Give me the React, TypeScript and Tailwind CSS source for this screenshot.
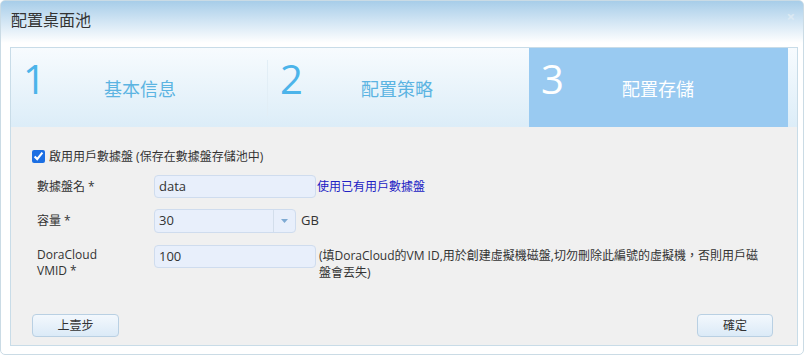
import React from "react";

const steps = [
  { n: "1", label: "基本信息", active: false },
  { n: "2", label: "配置策略", active: false },
  { n: "3", label: "配置存儲", active: true },
];

const App = () => {
  return (
    <div className="w-[806px] h-[355px] bg-white font-['Open_Sans','Noto_Sans_CJK_TC',sans-serif] text-[#333]">
      <div className="w-[804px] h-[355px] rounded-[5px] border border-[#cadbe5] bg-[linear-gradient(to_bottom,#a7cde9_0px,#ffffff_42px)] flex flex-col">
        {/* Title bar */}
        <div className="h-[46px] flex items-start justify-between pl-[10px] pr-[8px] pt-[7px]">
          <span className="text-[16px] leading-[24px] text-[#333]">配置桌面池</span>
          <span className="text-[15px] leading-[16px] font-bold text-[#dbe9f3]">×</span>
        </div>

        {/* Panel */}
        <div className="ml-[9px] w-[788px] h-[299px] border border-[#c8dce8] flex flex-col">
          {/* Steps */}
          <div className="h-[79px] flex bg-[linear-gradient(to_bottom,#f7fbfe,#dcedf8)] pr-[8px]">
            {steps.map((s, i) => (
              <React.Fragment key={s.n}>
                <div
                  className={
                    "h-full flex items-center pl-[12px] " +
                    (i === 0 ? "w-[256px] " : i === 1 ? "w-[261px] " : "w-[259px] ") +
                    (s.active ? "bg-[#99caf1] text-white" : "text-[#4cb4ea]")
                  }
                >
                  <span className="w-[81px] mb-[18px] text-[40px] leading-[40px]">{s.n}</span>
                  <span className={"text-[18px] leading-[24px] mt-[2px] " + (s.active ? "text-white" : "text-[#5cb4e2]")}>
                    {s.label}
                  </span>
                </div>
                {i === 0 && <div className="w-[1px] h-[56px] self-center bg-[#e2eef6]" />}
              </React.Fragment>
            ))}
          </div>

          {/* Body */}
          <div className="flex-1 bg-[#f0f0f0] flex flex-col text-[12px]">
            <label className="mt-[23px] ml-[21px] h-[13px] flex items-center gap-[4px]">
              <input type="checkbox" checked readOnly className="w-[13px] h-[13px] m-0 accent-[#1c6fe3]" />
              <span className="leading-[16px]">啟用用戶數據盤 (保存在數據盤存儲池中)</span>
            </label>

            <div className="mt-[12px] flex items-center pl-[26px]">
              <span className="w-[117px]">數據盤名 *</span>
              <div className="w-[162px] h-[23px] rounded-[4px] border border-[#cfdcee] bg-[#e8effb] pl-[4px] flex items-center text-[13px]">
                data
              </div>
              <a className="text-[#2121c4] ml-[1px]">使用已有用戶數據盤</a>
            </div>

            <div className="mt-[11px] flex items-center pl-[26px]">
              <span className="w-[117px]">容量 *</span>
              <div className="w-[142px] h-[24px] rounded-[4px] border border-[#cfdcee] bg-[#e8effb] flex items-center text-[13px]">
                <span className="flex-1 pl-[4px]">30</span>
                <span className="w-[22px] h-full border-l border-[#d3deeb] flex items-center justify-center">
                  <svg width="7" height="4" viewBox="0 0 7 4">
                    <path d="M0 0 L7 0 L3.5 4 Z" fill="#7eaad3" />
                  </svg>
                </span>
              </div>
              <span className="ml-[5px] text-[13px]">GB</span>
            </div>

            <div className="mt-[12px] flex items-start pl-[26px]">
              <span className="w-[117px] pt-[2px] leading-[16px]">
                DoraCloud
                <br />
                VMID *
              </span>
              <div className="w-[162px] h-[23px] shrink-0 rounded-[4px] border border-[#cfdcee] bg-[#e8effb] pl-[4px] flex items-center text-[13px]">
                100
              </div>
              <span className="ml-[3px] w-[443px] pt-[2px] leading-[17px]">
                (填DoraCloud的VM ID,用於創建虛擬機磁盤,切勿刪除此編號的虛擬機，否則用戶磁盤會丟失)
              </span>
            </div>

            <div className="mt-auto mb-[8px] flex justify-between pl-[21px] pr-[24px]">
              <button className="w-[87px] h-[23px] rounded-[4px] border border-[#b9d0e3] bg-[linear-gradient(to_bottom,#f3f8fd,#dbeaf7)] text-[12px] text-[#333]">
                上壹步
              </button>
              <button className="w-[76px] h-[23px] rounded-[4px] border border-[#b9d0e3] bg-[linear-gradient(to_bottom,#f3f8fd,#dbeaf7)] text-[12px] text-[#333]">
                確定
              </button>
            </div>
          </div>
        </div>
      </div>
    </div>
  );
};

export default App;
